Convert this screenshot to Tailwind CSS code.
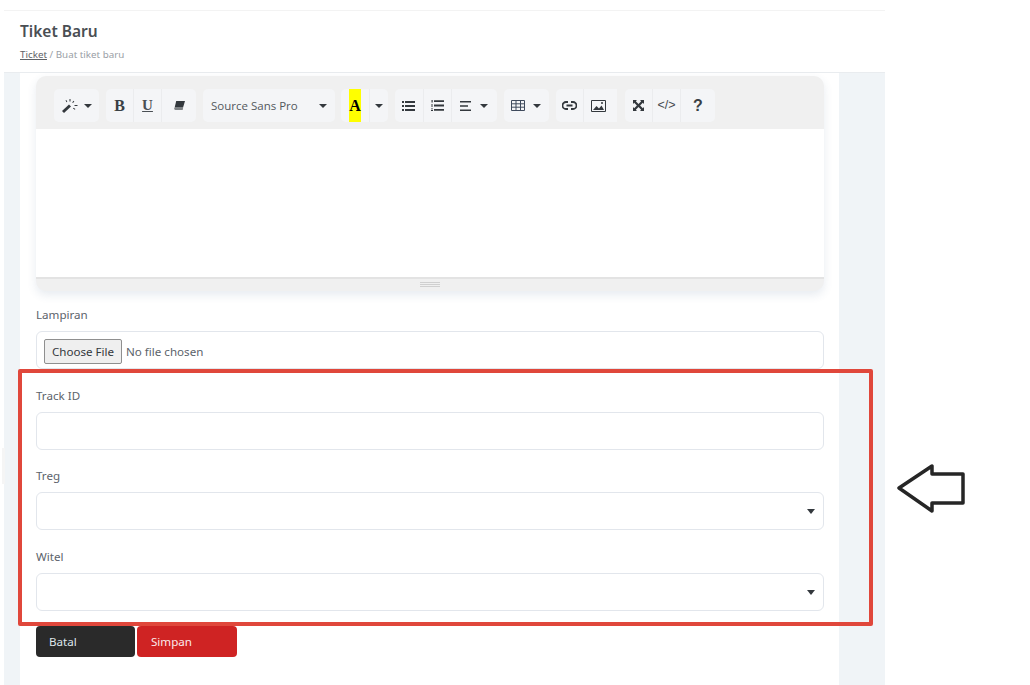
<!DOCTYPE html>
<html>
<head>
<meta charset="utf-8">
<title>Tiket Baru</title>
<script src="https://cdn.jsdelivr.net/npm/@tailwindcss/browser@4"></script>
</head>
<body class="bg-white overflow-hidden font-['Noto_Sans','Open_Sans',sans-serif]">
<div class="relative w-[1030px] h-[685px] overflow-hidden">
  <div class="w-[885px] h-[685px] pl-[4px] pt-[10px]">
    <div class="h-full bg-[#f0f4f7] flex flex-col">
      <!-- header -->
      <div class="h-[63px] bg-white border-t border-[#f3f3f3] border-b border-b-[#e9ecef] pl-[16px] pt-[9px] shrink-0">
        <h1 class="text-[15.5px] leading-[22px] font-semibold text-[#4a4e53]">Tiket Baru</h1>
        <p class="text-[9.8px] leading-[14px] mt-[6px] text-[#9aa0a6]"><a class="underline text-[#5f6368]">Ticket</a> / Buat tiket baru</p>
      </div>
      <!-- card -->
      <div class="ml-[16px] w-[819px] flex-1 bg-white pl-[16px] pr-[15px] pt-[3px]">
        <!-- editor -->
        <div class="rounded-[10px] shadow-[0_4px_10px_rgba(60,90,130,0.12)] overflow-hidden bg-[#f0f0f0] h-[215px] flex flex-col">
          <div class="h-[53px] pt-[13px] pl-[18px] flex text-[#33383d] text-[12px] shrink-0">
            <!-- style -->
            <div class="h-[33px] w-[45px] bg-[#f4f5f7] rounded-[5px] flex items-center justify-center gap-[6px]">
              <svg class="w-[16px] h-[14px]" viewBox="0 0 16 14" fill="#33383d"><path d="M0 12 7 5.500 9 7.500 2 14z"/><path d="M7.500 0h1v2.500h-1zM3.500 1.500l.8-.5 1 1.800-.8.5zM11.500 1.800l.8.600-1.300 1.600-.8-.6zM12.500 6h3v1h-3zM11 9.500l.6-.8 1.800 1.200-.6.800z"/></svg>
              <span class="w-0 h-0 border-x-[4px] border-x-transparent border-t-[4px] border-t-[#33383d]"></span>
            </div>
            <!-- font style -->
            <div class="ml-[7px] h-[33px] w-[90px] bg-[#f4f5f7] rounded-[5px] flex items-center">
              <span class="w-[27px] text-center font-['Liberation_Serif',serif] font-bold text-[16px] text-[#3a3f44]">B</span>
              <span class="w-[29px] h-full flex items-center justify-center border-x border-[#ebecee] font-['Liberation_Serif',serif] font-bold text-[15px] underline text-[#4a4f54]">U</span>
              <span class="w-[34px] flex justify-center">
                <svg class="w-[11px] h-[9px]" viewBox="0 0 11 9" fill="#33383d"><path d="M2.200 0H11L9.200 6H.8z"/><path d="M.8 6h8.400L8.700 9H1.200L0 8z" fill="#55595e" opacity=".75"/></svg>
              </span>
            </div>
            <!-- font -->
            <div class="ml-[7px] h-[33px] w-[132px] bg-[#f4f5f7] rounded-[5px] flex items-center justify-between pl-[8px] pr-[8px]">
              <span class="text-[11.5px] text-[#53585d] font-['Open_Sans',sans-serif]">Source Sans Pro</span>
              <span class="w-0 h-0 border-x-[4px] border-x-transparent border-t-[4px] border-t-[#33383d]"></span>
            </div>
            <!-- color -->
            <div class="ml-[6px] h-[33px] w-[47px] bg-[#f4f5f7] rounded-[5px] flex items-center">
              <span class="ml-[8px] w-[12px] h-full bg-[#ffff00] text-black flex items-center justify-center font-['Liberation_Serif',serif] font-bold text-[16px]">A</span>
              <span class="ml-[8px] h-full border-l border-[#ebecee] flex-1 flex items-center justify-center">
                <span class="w-0 h-0 border-x-[4px] border-x-transparent border-t-[4px] border-t-[#33383d]"></span>
              </span>
            </div>
            <!-- lists -->
            <div class="ml-[7px] h-[33px] w-[102px] bg-[#f4f5f7] rounded-[5px] flex items-center">
              <span class="w-[28px] flex justify-center pr-[2px]">
                <svg class="w-[13px] h-[10px]" viewBox="0 0 13 10" fill="#33383d"><path d="M0 0h2v2H0zM0 4h2v2H0zM0 8h2v2H0zM3 .1h10v1.800H3zM3 4.100h10v1.800H3zM3 8.100h10v1.800H3z"/></svg>
              </span>
              <span class="w-[29px] h-full border-x border-[#ebecee] flex items-center justify-center">
                <svg class="w-[13px] h-[11px]" viewBox="0 0 13 11" fill="#33383d"><path d="M.5 0h1.200v2.500H.5zM0 4.500h2v.8H0zM0 5.800h2v.8H0zM0 8.500h2v.7H0zM0 10h2v1H0zM3 .3h10v1.800H3zM3 4.600h10v1.800H3zM3 8.900h10v1.800H3z"/></svg>
              </span>
              <span class="flex-1 flex items-center justify-center gap-[8px] pr-[2px]">
                <svg class="w-[12px] h-[10px]" viewBox="0 0 12 10" fill="#33383d"><path d="M0 0h11v1.500H0zM0 4.200h8v1.500H0zM0 8.500h11V10H0z"/></svg>
                <span class="w-0 h-0 border-x-[4px] border-x-transparent border-t-[4px] border-t-[#33383d]"></span>
              </span>
            </div>
            <!-- table -->
            <div class="ml-[7px] h-[33px] w-[45px] bg-[#f4f5f7] rounded-[5px] flex items-center justify-center gap-[8px] pr-[2px]">
              <svg class="w-[14px] h-[11px]" viewBox="0 0 14 11" fill="none" stroke="#3f4a5c"><path d="M.5.500h13v10H.5zM.5 3.800h13M.5 7.200h13M5 .500v10M9.500 .500v10"/></svg>
              <span class="w-0 h-0 border-x-[4px] border-x-transparent border-t-[4px] border-t-[#33383d]"></span>
            </div>
            <!-- insert -->
            <div class="ml-[7px] h-[33px] w-[61px] bg-[#f4f5f7] rounded-l-[5px] flex items-center">
              <span class="w-[28px] h-full flex items-center justify-center border-r border-[#ebecee]">
                <svg class="w-[15px] h-[9px]" viewBox="0 0 15 9" fill="none" stroke="#33383d" stroke-width="1.800"><path d="M6 1H4a3.500 3.500 0 0 0 0 7h2M9 1h2a3.500 3.500 0 0 1 0 7H9M4.500 4.500h6"/></svg>
              </span>
              <span class="flex-1 flex justify-center pr-[4px]">
                <svg class="w-[15px] h-[12px]" viewBox="0 0 15 12" fill="none" stroke="#33383d"><path d="M.5.500h14v11H.5z"/><path d="M2 10l3.500-4 2.500 2.500 2.500-3L13 10z" fill="#33383d" stroke="none"/><circle cx="11" cy="3" r="1" fill="#33383d" stroke="none"/></svg>
              </span>
            </div>
            <!-- misc -->
            <div class="ml-[8px] h-[33px] w-[90px] bg-[#f4f5f7] rounded-[5px] flex items-center">
              <span class="w-[27px] flex justify-center">
                <svg class="w-[11px] h-[11px]" viewBox="0 0 11 11" fill="#33383d"><path d="M0 0h4L2.800 1.200 5.500 3.900 8.200 1.200 7 0h4v4L9.800 2.800 7.100 5.500 9.800 8.200 11 7v4H7l1.200-1.200L5.500 7.100 2.800 9.800 4 11H0V7l1.200 1.200L3.900 5.500 1.200 2.800 0 4z"/></svg>
              </span>
              <span class="w-[29px] h-full border-x border-[#ebecee] flex items-center justify-center text-[12.5px] text-[#454a4f] font-['Liberation_Sans',sans-serif]">&lt;/&gt;</span>
              <span class="w-[34px] text-center font-['Liberation_Sans',sans-serif] font-bold text-[16px] text-[#3a3f44]">?</span>
            </div>
          </div>
          <div class="h-[148px] bg-white shrink-0"></div>
          <div class="flex-1 border-t-2 border-[#e3e3e3] flex justify-center pt-[2px]">
            <div class="w-[20px] h-[5px] border-y border-[#d0d0d0] mt-[1px]"><span class="block h-px bg-[#d0d0d0] mt-px"></span></div>
          </div>
        </div>
        <!-- form -->
        <label class="block text-[11.6px] leading-[16px] text-[#5c636b] mt-[16px]">Lampiran</label>
        <div class="mt-[8px] h-[38px] border border-[#e2e6ec] rounded-[6px] flex items-center pl-[7px] pt-[3px] text-[11.6px]">
          <span class="h-[25px] w-[78px] flex items-center justify-center bg-[#efefef] border border-[#8f8f8f] rounded-[2px] text-[#33383d]">Choose File</span>
          <span class="ml-[4px] text-[#5c636b]">No file chosen</span>
        </div>
        <label class="block text-[11.6px] leading-[16px] text-[#5c636b] mt-[19px]">Track ID</label>
        <input type="text" class="block w-full mt-[8px] h-[38px] border border-[#e2e6ec] rounded-[6px] bg-white">
        <label class="block text-[11.6px] leading-[16px] text-[#5c636b] mt-[18px]">Treg</label>
        <div class="mt-[8px] h-[38px] border border-[#e2e6ec] rounded-[6px] flex items-center justify-end pr-[8px]">
          <span class="w-0 h-0 border-x-[4px] border-x-transparent border-t-[5px] border-t-[#33383d]"></span>
        </div>
        <label class="block text-[11.6px] leading-[16px] text-[#5c636b] mt-[19px]">Witel</label>
        <div class="mt-[8px] h-[38px] border border-[#e2e6ec] rounded-[6px] flex items-center justify-end pr-[8px]">
          <span class="w-0 h-0 border-x-[4px] border-x-transparent border-t-[5px] border-t-[#33383d]"></span>
        </div>
        <div class="mt-[15px] flex gap-[2px] text-[11.6px]">
          <button class="w-[99px] h-[31px] bg-[#2a2a2a] text-[#dfe6ea] rounded-[4px] text-left pl-[13px]">Batal</button>
          <button class="w-[100px] h-[31px] bg-[#cf2323] text-[#fbeaea] rounded-[4px] text-left pl-[14px]">Simpan</button>
        </div>
      </div>
    </div>
  </div>
  <!-- faint tab on the left edge -->
  <div class="absolute left-[2px] top-[448px] w-[3px] h-[36px] bg-[#f5f5f5]"></div>
  <!-- annotation drawn over the page -->
  <div class="absolute left-[18px] top-[369px] w-[855px] h-[257px] border-[4px] border-[#e0473b] rounded-[2px]"></div>
  <svg class="absolute left-[895px] top-[462px] w-[72px] h-[52px]" viewBox="0 0 72 52" fill="#fff" stroke="#262626" stroke-width="3.500" stroke-linejoin="round"><path d="M4 26 37 4v8h31v29H37v8z"/></svg>
</div>
</body>
</html>
